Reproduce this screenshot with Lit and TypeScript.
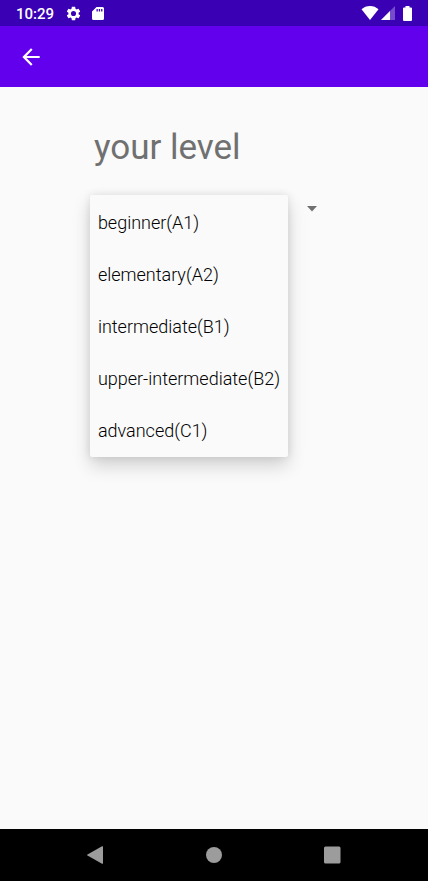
import { LitElement, html, css } from "lit";
import { customElement, state } from "lit/decorators.js";

const LEVELS = [
  "beginner(A1)",
  "elementary(A2)",
  "intermediate(B1)",
  "upper-intermediate(B2)",
  "advanced(C1)",
];

@customElement("status-bar")
class StatusBar extends LitElement {
  static styles = css`
    :host {
      display: flex;
      align-items: center;
      height: 26px;
      padding: 0 16px;
      background: #3a00b4;
      color: #fff;
    }
    .time {
      font-size: 15px;
      line-height: 18px;
      padding-top: 2px;
      font-weight: 500;
      margin-right: 11px;
    }
    .left {
      display: flex;
      align-items: center;
      gap: 8px;
      flex: 1;
    }
    .right {
      display: flex;
      align-items: center;
      gap: 2px;
    }
    svg {
      display: block;
      fill: currentColor;
    }
    .battery {
      margin-left: 6px;
    }
  `;

  render() {
    return html`
      <span class="time">10:29</span>
      <div class="left">
        <svg width="17" height="17" viewBox="0 0 24 24" aria-hidden="true">
          <path d="M19.14 12.94c.04-.3.06-.61.06-.94 0-.32-.02-.64-.07-.94l2.03-1.58a.49.49 0 0 0 .12-.61l-1.92-3.32a.49.49 0 0 0-.59-.22l-2.39.96c-.5-.38-1.03-.7-1.62-.94l-.36-2.54a.48.48 0 0 0-.48-.41h-3.84c-.24 0-.43.17-.47.41l-.36 2.54c-.59.24-1.13.57-1.62.94l-2.39-.96a.48.48 0 0 0-.59.22L2.74 8.87c-.12.21-.08.47.12.61l2.03 1.58c-.05.3-.09.63-.09.94s.02.64.07.94l-2.03 1.58a.49.49 0 0 0-.12.61l1.92 3.32c.12.22.37.29.59.22l2.39-.96c.5.38 1.03.7 1.62.94l.36 2.54c.05.24.24.41.48.41h3.84c.24 0 .44-.17.47-.41l.36-2.54c.59-.24 1.13-.56 1.62-.94l2.39.96c.22.08.47 0 .59-.22l1.92-3.32a.49.49 0 0 0-.12-.61l-2.01-1.58zM12 15.6a3.6 3.6 0 1 1 0-7.2 3.6 3.6 0 0 1 0 7.2z" />
        </svg>
        <svg width="16" height="17" viewBox="0 0 16 17" aria-hidden="true">
          <path d="M6.500 2H12.500Q14 2 14 3.500V13.500Q14 15 12.500 15H3.500Q2 15 2 13.500V6.500zM6.500 4v2.500h1.300V4zm2.300 0v2.500h1.300V4zm2.300 0v2.500h1.300V4z" fill-rule="evenodd" />
        </svg>
      </div>
      <div class="right">
        <svg width="18" height="14" viewBox="0 0 18 14" aria-hidden="true">
          <path d="M9 14 0.5 3.3C2.8 1.2 5.7 0 9 0s6.2 1.2 8.5 3.3z" />
        </svg>
        <svg width="14" height="14" viewBox="0 0 14 14" aria-hidden="true">
          <path d="M14 0v14H0z" opacity="0.3" />
          <path d="M9 5v9H0z" />
        </svg>
        <svg class="battery" width="9" height="15" viewBox="0 0 9 15" aria-hidden="true">
          <path d="M2.500 1.500V0h4v1.500H8a1 1 0 0 1 1 1V14a1 1 0 0 1-1 1H1a1 1 0 0 1-1-1V2.500a1 1 0 0 1 1-1z" />
        </svg>
      </div>
    `;
  }
}

@customElement("nav-bar")
class NavBar extends LitElement {
  static styles = css`
    :host {
      display: grid;
      grid-template-columns: repeat(3, 1fr);
      align-items: center;
      height: 52px;
      padding: 0 36px;
      background: #000;
      color: #9c9c9c;
    }
    button {
      justify-self: center;
      padding: 8px;
      border: 0;
      background: none;
      color: inherit;
    }
    svg {
      display: block;
      fill: currentColor;
    }
  `;

  render() {
    return html`
      <button aria-label="Back">
        <svg width="18" height="18" viewBox="0 0 18 18">
          <path d="M17 1v16q0 1.200-1 .7L1.500 9.500a.6.6 0 0 1 0-1L16 .3q1-.5 1 .7z" />
        </svg>
      </button>
      <button aria-label="Home">
        <svg width="18" height="18" viewBox="0 0 18 18"><circle cx="9" cy="9" r="8" /></svg>
      </button>
      <button aria-label="Overview">
        <svg width="18" height="18" viewBox="0 0 18 18">
          <rect x="0" y="0.5" width="16.500" height="17" rx="1.500" />
        </svg>
      </button>
    `;
  }
}

@customElement("level-picker")
class LevelPicker extends LitElement {
  @state() private open = true;

  static styles = css`
    :host {
      display: block;
    }
    .title {
      display: block;
      padding: 0 4px;
      font-size: 35px;
      line-height: 48px;
      color: #707070;
    }
    .field {
      position: relative;
      margin-top: 23px;
    }
    .trigger {
      display: flex;
      justify-content: flex-end;
      align-items: center;
      width: 100%;
      height: 27px;
      padding: 0 20px;
      border: 0;
      background: none;
      color: #707070;
    }
    .trigger svg {
      display: block;
      fill: currentColor;
    }
    .menu {
      position: absolute;
      top: 0;
      left: 0;
      appearance: none;
      height: auto;
      margin: 0;
      padding: 1px 0;
      border: 0;
      border-radius: 2px;
      outline: 0;
      overflow: hidden;
      background: #fafafa;
      color: #000;
      font-family: inherit;
      font-size: 18px;
      box-shadow: 0 9px 18px rgba(0, 0, 0, 0.16), 0 0 8px rgba(0, 0, 0, 0.1);
    }
    .menu[hidden] {
      display: none;
    }
    .menu option {
      box-sizing: border-box;
      height: 52px;
      padding: 16px 8px;
      font-weight: 300;
    }
  `;

  private toggle() {
    this.open = !this.open;
  }

  render() {
    return html`
      <label class="title" for="level">your level</label>
      <div class="field">
        <button
          class="trigger"
          aria-label="Choose your level"
          aria-expanded=${this.open}
          @click=${this.toggle}
        >
          <svg width="12" height="6" viewBox="0 0 12 6"><path d="M1 0h10L6 5.500z" /></svg>
        </button>
        <select class="menu" id="level" size="5" ?hidden=${!this.open} @change=${this.toggle}>
          ${LEVELS.map((level) => html`<option>${level}</option>`)}
        </select>
      </div>
    `;
  }
}

@customElement("app-root")
class AppRoot extends LitElement {
  static styles = css`
    :host {
      display: flex;
      flex-direction: column;
      min-height: 100vh;
      background: #fafafa;
      font-family: Roboto, "Noto Sans", sans-serif;
    }
    .toolbar {
      display: flex;
      align-items: center;
      height: 61px;
      padding: 0 10px;
      background: #6200ee;
    }
    .back {
      padding: 8px;
      border: 0;
      background: none;
      color: #fff;
    }
    .back svg {
      display: block;
      fill: currentColor;
    }
    main {
      flex: 1;
      padding: 37px 21%;
    }
  `;

  render() {
    return html`
      <status-bar></status-bar>
      <header class="toolbar">
        <button class="back" aria-label="Navigate up">
          <svg width="26" height="26" viewBox="0 0 24 24">
            <path d="M20 11H7.830l5.590-5.590L12 4l-8 8 8 8 1.410-1.410L7.830 13H20v-2z" />
          </svg>
        </button>
      </header>
      <main><level-picker></level-picker></main>
      <nav-bar></nav-bar>
    `;
  }
}
